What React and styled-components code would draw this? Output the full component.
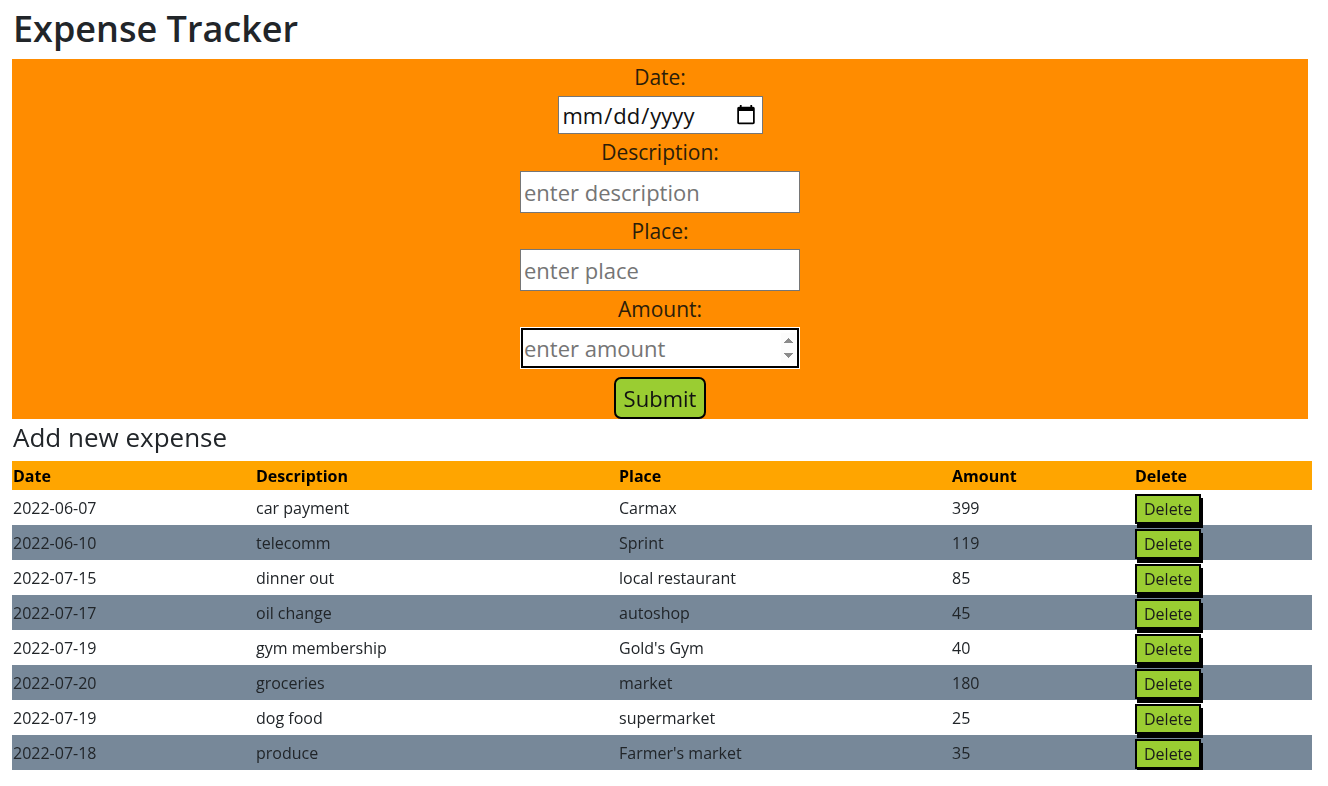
import React from "react"
import styled, { createGlobalStyle } from "styled-components"

const GlobalStyle = createGlobalStyle`
  body {
    margin: 0;
    font-family: "Open Sans", "Noto Sans", sans-serif;
    color: #212529;
    background: #fff;
  }
`

const Page = styled.div`
  padding: 0 16px 0 12px;
`

const Title = styled.h1`
  font-size: 36px;
  font-weight: 600;
  line-height: 1.2;
  margin: 0;
  padding: 7px 0 9px 1px;
`

const FormPanel = styled.form`
  background: #ff8c00;
  width: 1296px;
  display: flex;
  flex-direction: column;
  align-items: center;
`

const Label = styled.label`
  font-size: 21px;
  line-height: 36px;
  height: ${p => (p.$tall ? "37px" : "36px")};
  color: #2b1d0a;
`

const Input = styled.input`
  box-sizing: border-box;
  width: ${p => (p.type === "date" ? "205px" : "280px")};
  height: ${p => (p.type === "date" ? "38px" : "42px")};
  font-family: inherit;
  font-size: 22px;
  padding: 0 3px;
  border: 1px solid ${p => (p.$focused ? "#fff" : "#767676")};
  background: #fff;
  color: #111;
  outline: ${p => (p.$focused ? "2px solid #000" : "none")};
  outline-offset: ${p => (p.$focused ? "-3px" : "0")};
  &:focus {
    outline: 2px solid #000;
    outline-offset: -3px;
  }
  &::placeholder {
    color: #757575;
  }
`

const SubmitButton = styled.button`
  margin-top: 8px;
  height: 42px;
  padding: 0 8px;
  font-family: inherit;
  font-size: 22px;
  background: #9acd32;
  border: 2px solid #000;
  border-radius: 7px;
  color: #111;
`

const SectionTitle = styled.h3`
  font-size: 26px;
  font-weight: 500;
  line-height: 1.2;
  margin: 0;
  padding: 3px 0 8px 1px;
`

const Table = styled.table`
  width: 1300px;
  border-collapse: collapse;
  table-layout: fixed;
`

const HeadCell = styled.th`
  background: #ffa500;
  text-align: left;
  font-size: 16px;
  font-weight: 700;
  color: #000;
  height: 29px;
  padding: 0 1px;
`

const Row = styled.tr`
  background: ${p => (p.$striped ? "#778899" : "#fff")};
`

const Cell = styled.td`
  height: 35px;
  padding: 0 1px;
  font-size: 16px;
  color: #212529;
  vertical-align: middle;
`

const DeleteButton = styled.button`
  font-family: inherit;
  font-size: 16px;
  background: #9acd32;
  color: #1a1a1a;
  border: 2px solid #000;
  box-shadow: 2px 4px 0 #000;
  padding: 2px 7px;
  margin-top: 2px;
`

const expenses = [
  ["2022-06-07", "car payment", "Carmax", "399"],
  ["2022-06-10", "telecomm", "Sprint", "119"],
  ["2022-07-15", "dinner out", "local restaurant", "85"],
  ["2022-07-17", "oil change", "autoshop", "45"],
  ["2022-07-19", "gym membership", "Gold's Gym", "40"],
  ["2022-07-20", "groceries", "market", "180"],
  ["2022-07-19", "dog food", "supermarket", "25"],
  ["2022-07-18", "produce", "Farmer's market", "35"],
]

export default function App() {
  return (
    <Page>
      <GlobalStyle />
      <Title>Expense Tracker</Title>
      <FormPanel onSubmit={e => e.preventDefault()}>
        <Label $tall>Date:</Label>
        <Input type="date" />
        <Label $tall>Description:</Label>
        <Input type="text" placeholder="enter description" />
        <Label>Place:</Label>
        <Input type="text" placeholder="enter place" />
        <Label>Amount:</Label>
        <Input type="number" placeholder="enter amount" $focused autoFocus />
        <SubmitButton type="submit">Submit</SubmitButton>
      </FormPanel>
      <SectionTitle>Add new expense</SectionTitle>
      <Table>
        <colgroup>
          <col style={{ width: 243 }} />
          <col style={{ width: 363 }} />
          <col style={{ width: 333 }} />
          <col style={{ width: 183 }} />
          <col style={{ width: 178 }} />
        </colgroup>
        <thead>
          <tr>
            <HeadCell>Date</HeadCell>
            <HeadCell>Description</HeadCell>
            <HeadCell>Place</HeadCell>
            <HeadCell>Amount</HeadCell>
            <HeadCell>Delete</HeadCell>
          </tr>
        </thead>
        <tbody>
          {expenses.map((e, i) => (
            <Row key={i} $striped={i % 2 === 1}>
              <Cell>{e[0]}</Cell>
              <Cell>{e[1]}</Cell>
              <Cell>{e[2]}</Cell>
              <Cell>{e[3]}</Cell>
              <Cell>
                <DeleteButton>Delete</DeleteButton>
              </Cell>
            </Row>
          ))}
        </tbody>
      </Table>
    </Page>
  )
}
